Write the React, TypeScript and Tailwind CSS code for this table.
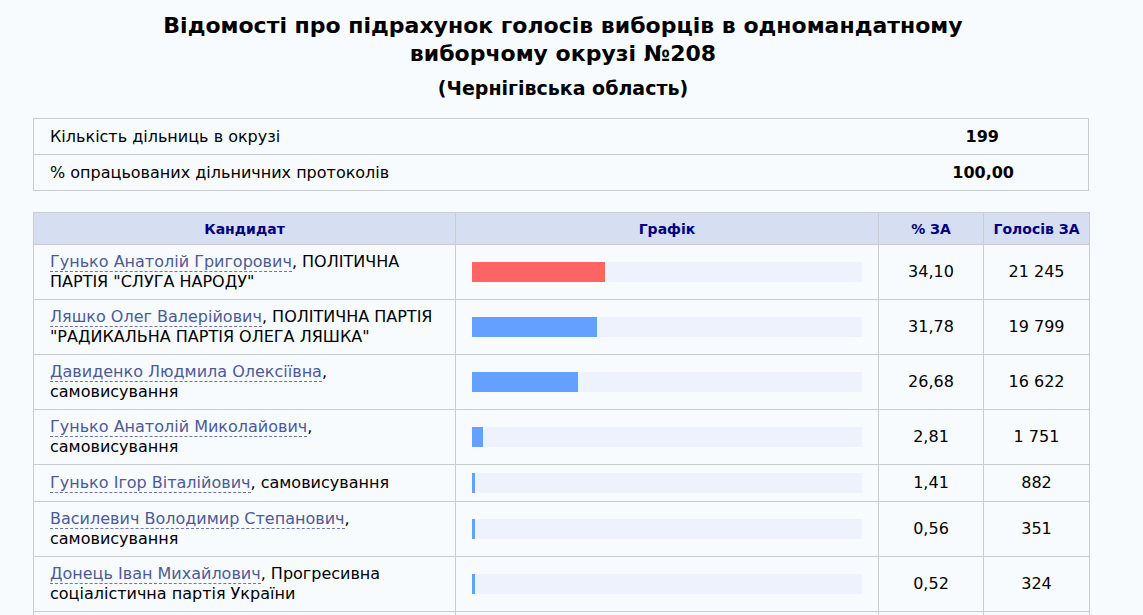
const rows = [
  { name: "Гунько Анатолій Григорович", party: "ПОЛІТИЧНА ПАРТІЯ \"СЛУГА НАРОДУ\"", pct: "34,10", votes: "21 245", bar: 133, lead: true },
  { name: "Ляшко Олег Валерійович", party: "ПОЛІТИЧНА ПАРТІЯ \"РАДИКАЛЬНА ПАРТІЯ ОЛЕГА ЛЯШКА\"", pct: "31,78", votes: "19 799", bar: 125 },
  { name: "Давиденко Людмила Олексіївна", party: "самовисування", pct: "26,68", votes: "16 622", bar: 106 },
  { name: "Гунько Анатолій Миколайович", party: "самовисування", pct: "2,81", votes: "1 751", bar: 11 },
  { name: "Гунько Ігор Віталійович", party: "самовисування", pct: "1,41", votes: "882", bar: 3 },
  { name: "Василевич Володимир Степанович", party: "самовисування", pct: "0,56", votes: "351", bar: 3 },
  { name: "Донець Іван Михайлович", party: "Прогресивна соціалістична партія України", pct: "0,52", votes: "324", bar: 3 },
  { name: "Ткаченко Олександр Петрович", party: "самовисування", pct: "0,41", votes: "255", bar: 3 },
];

export default function App() {
  return (
    <div className="min-h-screen w-full bg-[#f8fbfe] text-black font-['DejaVu_Sans','Verdana',sans-serif]">
      <div className="w-[1126px] pt-[12px]">
        {/* heading */}
        <h1 className="text-center text-[22px] font-bold leading-[28px]">
          Відомості про підрахунок голосів виборців в одномандатному
          <br />
          виборчому окрузі №208
        </h1>
        <h2 className="mt-[6px] text-center text-[19px] font-bold leading-[28px]">
          (Чернігівська область)
        </h2>

        {/* summary */}
        <table className="ml-[33px] mt-[16px] w-[1056px] border-collapse text-[16px]">
          <tbody>
            <tr className="h-[36px]">
              <td className="border-y border-l border-[#c9cdd2] pl-[16px]">Кількість дільниць в окрузі</td>
              <td className="w-[240px] border-y border-r border-[#c9cdd2] pr-[89px] text-right font-bold">199</td>
            </tr>
            <tr className="h-[36px]">
              <td className="border-y border-l border-[#c9cdd2] pl-[16px]">% опрацьованих дільничних протоколів</td>
              <td className="border-y border-r border-[#c9cdd2] pr-[74px] text-right font-bold">100,00</td>
            </tr>
          </tbody>
        </table>

        {/* results */}
        <table className="ml-[33px] mt-[21px] w-[1056px] table-fixed border-collapse text-[16px] leading-[20px]">
          <colgroup>
            <col className="w-[422px]" />
            <col className="w-[423px]" />
            <col className="w-[105px]" />
            <col className="w-[106px]" />
          </colgroup>
          <thead>
            <tr className="h-[32px] bg-[#d6def1] text-[14px] font-bold text-[#000080]">
              <th className="border border-[#c9cdd2]">Кандидат</th>
              <th className="border border-[#c9cdd2]">Графік</th>
              <th className="border border-[#c9cdd2]">% ЗА</th>
              <th className="border border-[#c9cdd2]">Голосів ЗА</th>
            </tr>
          </thead>
          <tbody>
            {rows.map((r) => (
              <tr key={r.name}>
                <td className="border border-[#c9cdd2] px-[16px] py-[7px]">
                  <span className="border-b border-dashed border-[#6a76a8] text-[#4c5a96]">{r.name}</span>, {r.party}
                </td>
                <td className="border border-[#c9cdd2] px-[16px] py-[8px]">
                  <div className="h-[20px] w-full bg-[#edf2fd]">
                    <div
                      className={r.lead ? "h-full bg-[#ff6464]" : "h-full bg-[#64a0ff]"}
                      style={{ width: r.bar }}
                    />
                  </div>
                </td>
                <td className="border border-[#c9cdd2] text-center">{r.pct}</td>
                <td className="border border-[#c9cdd2] text-center">{r.votes}</td>
              </tr>
            ))}
          </tbody>
        </table>
      </div>
    </div>
  );
}
